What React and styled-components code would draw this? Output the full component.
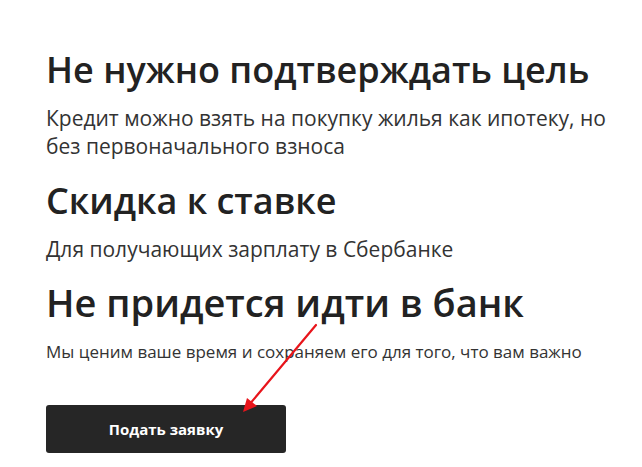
import React from "react";
import styled, { createGlobalStyle } from "styled-components";

const Global = createGlobalStyle`
  html, body { margin: 0; padding: 0; background: #fff; }
  body { font-family: "Open Sans", "Noto Sans", sans-serif; color: #222; }
`;

const Page = styled.div`
  position: relative;
  width: 642px;
  height: 467px;
  overflow: hidden;
  box-sizing: border-box;
  padding: 48px 20px 0 46px;
  display: flex;
  flex-direction: column;
  align-items: flex-start;
`;

const Feature = styled.section`
  display: flex;
  flex-direction: column;
  margin-top: ${(p) => p.$top || 0}px;
`;

const Title = styled.h2`
  margin: 0;
  font-size: ${(p) => p.$size || 36}px;
  line-height: ${(p) => (p.$size || 36) + 8}px;
  font-weight: 600;
  color: #222;
  white-space: nowrap;
`;

const Text = styled.p`
  margin: ${(p) => p.$top || 12}px 0 0;
  max-width: ${(p) => p.$max || 576}px;
  font-size: ${(p) => p.$size || 21}px;
  line-height: ${(p) => p.$lh || 28}px;
  font-weight: 400;
  color: #333;
`;

const Button = styled.button`
  margin-top: 40px;
  width: 240px;
  height: 48px;
  border: 0;
  border-radius: 3px;
  background: #262626;
  color: #fff;
  font-family: "Open Sans", sans-serif;
  font-size: 15px;
  font-weight: 700;
  cursor: pointer;
`;

const Arrow = styled.svg`
  position: absolute;
  left: 0;
  top: 0;
  pointer-events: none;
`;

export default function App() {
  return (
    <>
      <Global />
      <Page>
        <Feature>
          <Title>Не нужно подтверждать цель</Title>
          <Text>
            Кредит можно взять на покупку жилья как ипотеку, но без
            первоначального взноса
          </Text>
        </Feature>
        <Feature $top={19}>
          <Title>Скидка к ставке</Title>
          <Text $lh={29}>Для получающих зарплату в Сбербанке</Text>
        </Feature>
        <Feature $top={15}>
          <Title $size={38}>Не придется идти в банк</Title>
          <Text $size={17} $lh={26} $top={14}>
            Мы ценим ваше время и сохраняем его для того, что вам важно
          </Text>
        </Feature>
        <Button>Подать заявку</Button>
        <Arrow width="642" height="467" viewBox="0 0 642 467">
          <line x1="316" y1="325" x2="249" y2="405" stroke="#e8141b" strokeWidth="2.2" strokeLinecap="round" />
          <polygon points="243,412 247,398 257,406" fill="#e8141b" />
        </Arrow>
      </Page>
    </>
  );
}
